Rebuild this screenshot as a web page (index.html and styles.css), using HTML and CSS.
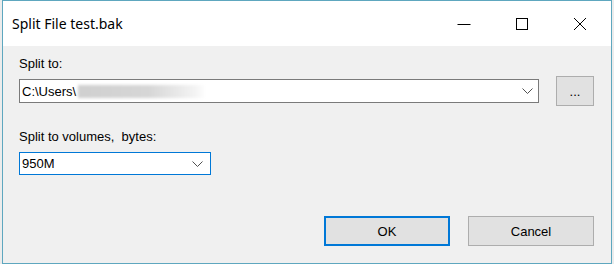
FILE: index.html
```html
<!DOCTYPE html>
<html>
<head>
<meta charset="utf-8">
<link rel="stylesheet" href="styles.css">
</head>
<body>
<div class="window">
  <div class="titlebar">
    <div class="title">Split File test.bak</div>
    <div class="caption-buttons">
      <div class="cap-btn">
        <svg width="14" height="14" viewBox="0 0 14 14"><path d="M0.5 7.5H13.5" stroke="#000" stroke-width="1"/></svg>
      </div>
      <div class="cap-btn">
        <svg width="14" height="14" viewBox="0 0 14 14"><rect x="1.5" y="1.5" width="11" height="11" fill="none" stroke="#000" stroke-width="1"/></svg>
      </div>
      <div class="cap-btn">
        <svg width="14" height="14" viewBox="0 0 14 14"><path d="M1 1L13 13M13 1L1 13" stroke="#000" stroke-width="1"/></svg>
      </div>
    </div>
  </div>
  <div class="content">
    <div class="label">Split to:</div>
    <div class="path-row">
      <div class="combo path-combo">
        <span class="combo-text">C:\Users\</span>
        <span class="blur"></span>
        <svg class="arrow" width="11" height="7" viewBox="0 0 11 7"><path d="M0.5 0.5L5.5 5.5L10.5 0.5" fill="none" stroke="#505050" stroke-width="1"/></svg>
      </div>
      <div class="btn browse">...</div>
    </div>
    <div class="label label-vol">Split to volumes,&nbsp; bytes:</div>
    <div class="combo vol-combo">
      <span class="combo-text">950M</span>
      <svg class="arrow" width="11" height="7" viewBox="0 0 11 7"><path d="M0.5 0.5L5.5 5.5L10.5 0.5" fill="none" stroke="#505050" stroke-width="1"/></svg>
    </div>
    <div class="actions">
      <div class="btn action default">OK</div>
      <div class="btn action">Cancel</div>
    </div>
  </div>
</div>
</body>
</html>
```

FILE: styles.css
```css
html, body {
  margin: 0;
  padding: 0;
}
body {
  background: #ececec;
  width: 614px;
  height: 264px;
  overflow: hidden;
  font-family: "Liberation Sans", Arial, sans-serif;
  font-size: 13px;
  color: #000;
}
.window {
  margin-left: 2px;
  width: 610px;
  height: 264px;
  box-sizing: border-box;
  border: 1px solid #5ea7bf;
  background: #f0f0f0;
  display: flex;
  flex-direction: column;
}
.titlebar {
  height: 45px;
  background: #fff;
  display: flex;
  align-items: center;
  justify-content: space-between;
  flex-shrink: 0;
}
.title {
  padding-left: 9px;
  font-family: "Noto Sans", sans-serif;
  font-size: 14px;
  color: #000;
}
.caption-buttons {
  display: flex;
  height: 100%;
  padding-right: 2px;
}
.cap-btn {
  width: 58px;
  height: 100%;
  display: flex;
  align-items: center;
  justify-content: center;
}
.cap-btn svg {
  display: block;
}
.content {
  flex: 1;
  padding: 10px 17px 0 16px;
  display: flex;
  flex-direction: column;
}
.label {
  line-height: 15px;
  height: 15px;
  margin-bottom: 8px;
  white-space: nowrap;
}
.label-vol {
  margin-top: 26px;
}
.path-row {
  display: flex;
  align-items: center;
  gap: 17px;
  height: 24px;
}
.combo {
  box-sizing: border-box;
  background: #fff;
  border: 1px solid #7a7a7a;
  display: flex;
  align-items: center;
  position: relative;
  padding-left: 2px;
}
.path-combo {
  width: 520px;
  height: 24px;
}
.vol-combo {
  width: 192px;
  height: 23px;
  border-color: #0078d7;
}
.combo-text {
  line-height: 15px;
}
.blur {
  display: block;
  width: 128px;
  height: 13px;
  margin-left: 2px;
  background: linear-gradient(to right, #cfcfcf, #d6d6d6 55%, #f4f4f4 92%, #fff);
  filter: blur(1.5px);
}
.arrow {
  position: absolute;
  right: 5px;
  top: 8px;
}
.vol-combo .arrow {
  right: 7px;
  top: 8px;
}
.btn {
  box-sizing: border-box;
  background: #e1e1e1;
  border: 1px solid #adadad;
  display: flex;
  align-items: center;
  justify-content: center;
  height: 30px;
}
.browse {
  width: 38px;
  flex-shrink: 0;
  padding-top: 1px;
}
.actions {
  display: flex;
  justify-content: flex-end;
  gap: 18px;
  margin-top: 41px;
}
.action {
  width: 126px;
}
.default {
  border: 2px solid #0078d7;
}
```
